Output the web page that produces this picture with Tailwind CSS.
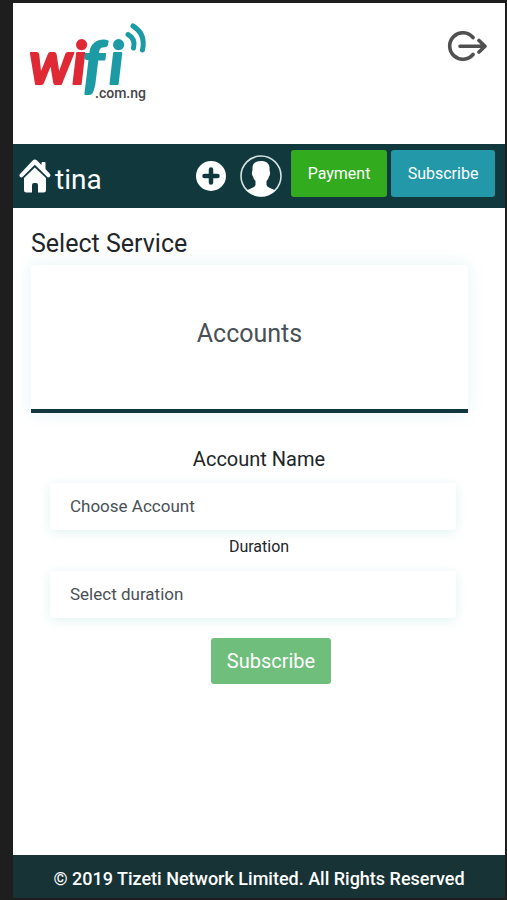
<!DOCTYPE html>
<html lang="en">
<head>
<meta charset="utf-8">
<meta name="viewport" content="width=device-width, initial-scale=1">
<title>wifi.com.ng – Select Service</title>
<script src="https://cdn.jsdelivr.net/npm/@tailwindcss/browser@4"></script>
</head>
<body class="flex min-h-screen flex-col border-t-3 border-r-2 border-b-2 border-l-13 border-[#1f1e1f] bg-white font-[Roboto,sans-serif] text-[#212529]">
  <header class="flex items-start justify-between pt-[15px] pr-[18px] pb-[42px] pl-4">
    <a href="#" aria-label="wifi.com.ng home">
      <svg class="h-[84px] w-[120px] overflow-visible" viewBox="29 18 120 84" role="img" aria-label="wifi.com.ng">
        <g font-family="Lato, sans-serif" font-weight="700" font-style="italic" stroke-width="2" stroke-linejoin="round">
          <text x="29" y="84" font-size="59" fill="#df2935" stroke="#df2935">w</text>
          <text x="72" y="84" font-size="59" fill="#df2935" stroke="#df2935">i</text>
          <text x="83" y="87" font-size="64" fill="#1c9ba5" stroke="#1c9ba5">f</text>
          <text x="109" y="84" font-size="59" fill="#1c9ba5" stroke="#1c9ba5">i</text>
        </g>
        <g fill="none" stroke="#1c9ba5" stroke-width="5" stroke-linecap="round">
          <path d="M128 34.500Q136 39 133.500 48"/>
          <path d="M133 26Q146 34 142.500 50"/>
        </g>
        <text x="95" y="98" font-family="Roboto, sans-serif" font-weight="500" font-size="14" fill="#48464a">.com.ng</text>
      </svg>
    </a>
    <button type="button" aria-label="Log out" class="mt-[13px]">
      <svg class="h-8 w-10" viewBox="448 31 40 32" fill="none" stroke="#505050" stroke-width="3.6" stroke-linecap="round" stroke-linejoin="round">
        <path d="M474 37.5A13.2 13.2 0 1 0 474 54.500"/>
        <path d="M461 46.200H485M480 40.500L486 46.200L480 52"/>
      </svg>
    </button>
  </header>

  <nav class="flex h-16 items-start bg-[#11393d] pt-1.5 pr-2.5 pl-1.5 text-white">
    <a href="#" class="flex items-start gap-1 pt-2">
      <svg class="h-9 w-8" viewBox="19 158 32 36" fill="#fff" aria-hidden="true">
        <path d="M34.800 159.500Q36 159.500 37 160.500L41.500 165V163Q41.500 162 42.500 162H44.500Q45.500 162 45.500 163V169L50 174Q51 175.500 49.500 177Q48 178 46.800 176.500L34.800 164.800L23 176.500Q21.500 178 20 177Q18.800 175.500 20 174L32.700 160.500Q33.700 159.500 34.800 159.500Z"/>
        <path d="M34.800 167.500L46 178V190Q46 192.500 43.500 192.500H38V185Q38 183 36 183H34Q32 183 32 185V192.500H26.500Q24 192.500 24 190V178Z"/>
      </svg>
      <span class="pt-1 text-[28px] leading-9">tina</span>
    </a>
    <div class="ml-auto flex items-start">
      <button type="button" aria-label="Add" class="mt-2.5 mr-3">
        <svg class="h-8 w-8" viewBox="0 0 32 32" aria-hidden="true">
          <circle cx="16" cy="16" r="15" fill="#fff"/>
          <path d="M16 9.500V22.500M9.500 16H22.500" stroke="#11393d" stroke-width="4.500" stroke-linecap="round"/>
        </svg>
      </button>
      <button type="button" aria-label="Profile" class="mt-1 mr-2">
        <svg class="h-11 w-11" viewBox="0 0 44 44" aria-hidden="true">
          <circle cx="22" cy="22" r="20" fill="none" stroke="#d5e3e5" stroke-width="1.600"/>
          <path d="M22 7C27.500 7 31 10 30.500 15Q30.500 17 31 18Q31.500 20.500 30 22.500Q29.500 25 27.500 27V31Q28 33 31 34Q35 35.500 36.500 36.500A20.500 20.500 0 0 1 7.500 36.500Q9 35.500 13 34Q16 33 16.500 31V27Q14.500 25 14 22.500Q12.500 20.500 13 18Q13.500 17 13.500 15Q13 10 17 8Q19 7 22 7Z" fill="#fff"/>
        </svg>
      </button>
      <button type="button" class="mr-1 h-[47px] w-24 rounded-[3px] bg-[#32ab1f] text-base">Payment</button>
      <button type="button" class="h-[47px] w-[104px] rounded-[3px] bg-[#2398a8] text-base">Subscribe</button>
    </div>
  </nav>

  <main class="flex-1 pt-5 pr-[37px] pl-[18px]">
    <h1 class="text-[25px] leading-8">Select Service</h1>
    <button type="button" class="mt-[5px] flex h-[148px] w-full items-center justify-center rounded-t-[4px] border-b-4 border-[#11373c] pb-1.5 text-[25px] text-[#495057] shadow-[0_0_18px_rgba(0,150,150,0.1)]">Accounts</button>
    <form class="mt-8 flex flex-col items-center pl-[19px] text-center">
      <label for="account" class="text-xl leading-7">Account Name</label>
      <div class="mt-2.5 w-full pr-3">
        <select id="account" class="h-[47px] w-full appearance-none rounded-[3px] bg-white px-5 text-[17px] text-[#495057] shadow-[0_2px_12px_rgba(0,150,150,0.12)]"><option>Choose Account</option></select>
      </div>
      <label for="duration" class="mt-[5px] text-base leading-6">Duration</label>
      <div class="mt-3 w-full pr-3">
        <select id="duration" class="h-[47px] w-full appearance-none rounded-[3px] bg-white px-5 text-[17px] text-[#495057] shadow-[0_2px_12px_rgba(0,150,150,0.12)]"><option>Select duration</option></select>
      </div>
      <button type="button" class="mt-5 ml-6 h-[46px] rounded-[3px] bg-[#70be7b] px-4 text-xl text-white">Subscribe</button>
    </form>
  </main>

  <footer class="bg-[#183335] pt-3 pb-[7px] text-center text-[18px] leading-6 font-medium text-white">© 2019 Tizeti Network Limited. All Rights Reserved</footer>
</body>
</html>
